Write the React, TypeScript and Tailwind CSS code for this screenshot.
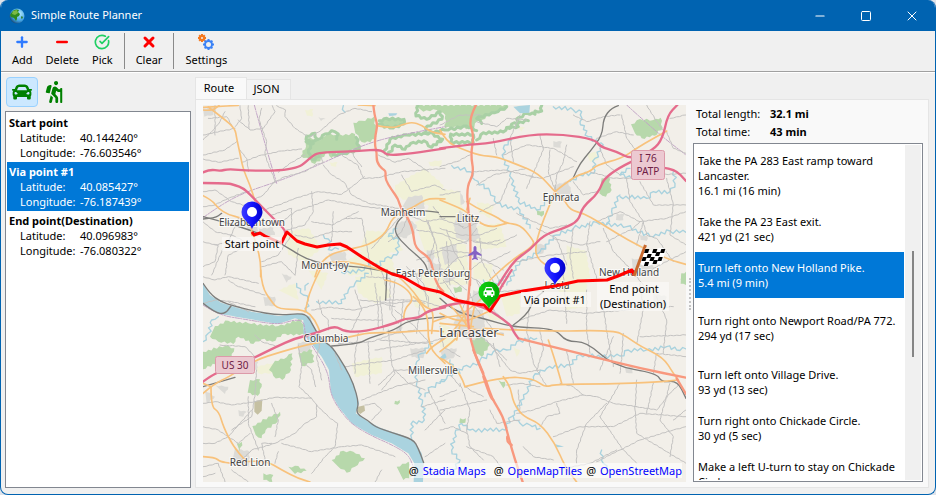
import type { ReactNode } from "react";
import { FaCar, FaHiking } from "react-icons/fa";
import { CircleCheckBig, Minus, Plus, Square, X } from "lucide-react";

/* ---------- Map data ---------- */

type Kind =
  | "farm" | "town" | "wood" | "woodEdge" | "quarry" | "river" | "stream" | "border"
  | "minor" | "rail" | "primary" | "trunk" | "motorway";

type Sheet = { x: number; y: number; shapes: Partial<Record<Kind, string[]>> };

const PAINT: Record<Kind, { fill?: string; stroke?: string; width?: number; dash?: string }> = {
  farm: { fill: "#f1f1d7" },
  town: { fill: "#dcdbd7" },
  wood: { fill: "#b7d8ab" },
  woodEdge: { stroke: "#a9d0a5", width: 9 },
  quarry: { fill: "#c5c0a2" },
  river: { fill: "#aad3df" },
  stream: { stroke: "#a9d2de", width: 4 },
  border: { stroke: "#c2a5c6", width: 3, dash: "14 4 4 4" },
  minor: { stroke: "#c3c2c1", width: 3 },
  rail: { stroke: "#7d7d7b", width: 4 },
  primary: { stroke: "#f8c27c", width: 5 },
  trunk: { stroke: "#f8987e", width: 7 },
  motorway: { stroke: "#e56b8c", width: 7 },
};

const ORDER: Kind[] = [
  "farm", "town", "wood", "woodEdge", "quarry", "river", "stream", "border",
  "minor", "rail", "primary", "trunk", "motorway",
];

/* Each sheet is surveyed at three units per map pixel, from its own origin. */
const SHEETS: Sheet[] = [
  {
    x: 290, y: 100,
    shapes: {
      wood: [
        "190 68 215 62 252 50 258 90 255 118 225 128 208 118 196 100",
        "45 112 95 120 110 100 140 105 195 102 212 146 180 152 160 165 140 160 125 175 115 158 75 192 60 178 32 168 48 140",
        "375 15 655 15 640 32 600 42 575 60 555 70 545 90 505 80 465 85 466 45 440 30 400 35",
        "270 58 340 56 345 72 300 84 272 74",
      ],
      woodEdge: [
        "50 108 75 100 82 118 62 126 48 118 50 108", "85 118 105 102 125 92 145 102 140 118", "48 125 70 130 55 150 60 172 75 180 90 160",
        "130 165 160 160 208 148 198 112", "268 62 290 55 342 58 342 72 300 84 268 72",
        "385 15 378 48 410 58 450 35 456 58 412 78 405 100 465 90 530 78 560 92",
        "283 152 300 118 350 105 420 98 458 118 425 142 402 122 362 130 345 148 315 135 292 165",
        "482 126 482 102 550 104 550 128 482 126", "560 120 580 98 640 96 665 72 715 62", "575 70 560 55 615 38 650 20",
      ],
      river: ["295 40 322 40 318 46 298 48", "670 20 720 15 718 38 690 40"],
    },
  },
  {
    x: 195, y: 75,
    shapes: {
      farm: [
        "600 330 690 280 745 330 740 400 640 380 600 360", "270 470 340 460 380 520 330 560 280 540",
        "450 560 520 520 590 540 600 600 460 600", "660 440 750 400 750 560 690 530", "330 105 355 102 352 125 336 122",
        "405 262 428 262 424 275 408 272", "700 260 740 255 735 275 705 272",
      ],
      town: [
        "640 365 680 360 690 400 640 420 622 395", "190 460 235 458 240 480 200 485", "640 430 665 450 655 480 635 470",
        "400 535 450 530 455 555 410 560", "24 100 60 95 55 120 28 125", "150 440 185 440 190 470 160 468",
        "370 125 392 132 378 138", "700 560 740 570 735 590 700 590",
      ],
      stream: [
        "385 480 400 492 400 524 430 522", "605 460 580 485 612 495 605 540 570 550 550 575 520 562 508 585 440 592",
        "445 92 450 112",
      ],
      border: ["178 90 205 190 245 325", "24 428 80 388 150 352 240 322 330 288 440 238 520 205 600 183 750 155"],
      minor: [
        "90 110 75 140 50 170 24 195", "130 135 165 165 205 160 240 110 232 92", "24 180 120 160", "40 130 95 125 110 150",
        "24 240 90 225 125 200", "140 262 200 240 260 228 320 222", "200 100 192 135 215 200 210 240 240 318",
        "245 92 272 105 270 125 300 160 335 182", "345 185 380 165 430 120 480 100 530 110", "24 252 70 262 130 250",
        "24 395 60 390 100 370 150 352", "205 405 250 390 300 370 370 350 440 358 490 320 508 305", "230 326 270 305 330 290 360 270 385 262 375 240",
        "385 270 410 300 448 322 470 360 520 385 610 400", "440 240 490 272 505 310 550 308 620 290 750 280", "275 465 330 450 355 410 350 350",
        "255 445 300 410 400 375 510 395 600 405", "415 410 410 500", "350 440 410 450 490 410", "24 440 60 470 110 480 150 500",
        "50 600 80 530 110 480", "90 600 100 540 180 500", "60 510 100 500 130 430", "450 430 500 430 515 510 530 600",
        "530 520 585 460 610 430", "620 300 650 350 720 330 750 345", "640 420 690 440 750 430", "230 420 290 400 290 480 250 540 200 560",
        "200 575 260 560 300 600", "24 500 70 512 60 560 24 575", "550 240 600 262 640 250 700 290", "500 275 480 250 470 225",
        "240 318 205 360 180 372", "160 290 155 250 135 225", "24 350 60 345 110 380 160 395", "700 440 720 500 700 560", "330 240 290 262 250 292",
        "640 420 620 470 580 500", "300 480 350 490 410 470 470 470", "135 92 140 130 120 155", "310 520 300 600", "60 92 60 180", "160 92 162 160",
      ],
      rail: ["24 425 100 445 180 470 260 505 330 552 400 570 500 575 600 595", "24 432 60 430 80 415", "730 412 680 405 640 410 605 440 598 475 640 520 690 562 700 595"],
      primary: [
        "40 96 85 130 120 160 125 190 137 245 145 285 165 330 180 378", "24 362 50 375 70 400 100 420 140 428 170 450 170 480",
        "175 480 185 510 197 560 197 605", "24 97 60 95 130 91", "545 152 590 160 620 150 650 141 680 150 708 172 750 178",
        "617 412 590 430 575 470 540 500 500 515 450 525 400 540 370 575 360 605", "617 412 650 400 680 380 705 370 750 372",
        "350 572 400 562 450 560 510 570 600 600", "490 90 540 92", "24 105 50 108 72 92",
      ],
      trunk: ["535 90 538 120 548 150 540 185 540 215 545 230 545 262 562 282 573 288 570 312 590 345 610 372 617 400 640 430 655 470 660 520 705 548 715 590"],
      motorway: [
        "24 292 45 283 75 288 100 282 160 287 255 287 305 278 325 268 355 240 375 233 440 230 490 228 560 223 575 242 650 235 750 220",
        "24 324 95 324 120 330 145 340 165 358 200 395 250 445 275 470 262 503",
      ],
    },
  },
  {
    x: 440, y: 95,
    shapes: {
      farm: [
        "0 280 60 290 70 350 40 400 0 380", "0 430 80 450 85 570 0 570", "110 320 160 330 150 370 115 350",
        "380 450 440 470 450 550 380 550", "100 500 160 510 150 560 100 550", "440 175 470 170 475 195 450 200", "230 92 255 98 245 110",
      ],
      town: [
        "60 345 105 380 120 430 90 440 50 430 40 390", "5 455 50 450 55 490 15 510", "530 355 553 358 550 376 528 375",
        "340 138 366 140 362 158 340 155", "340 270 385 260 400 305 350 315", "575 490 640 500 640 545 580 540", "60 285 75 320 62 330",
        "600 420 622 422 620 438 602 435", "285 445 320 450 310 475 288 478",
      ],
      wood: [
        "573 88 600 72 640 75 662 68 668 98 645 122 605 130 585 115",
        "485 250 505 245 515 285 498 305 478 295", "580 210 590 205 605 235 595 250", "290 345 312 348 305 365 292 360", "724 535 738 538 738 570 722 566",
      ],
      woodEdge: ["200 98 235 95 230 72 262 55 285 58 285 48 305 48 305 32"],
      stream: [
        "340 35 400 45 425 50 420 80 445 125 490 150 465 190 462 235 420 240 390 260", "215 135 190 160 190 190 215 250 235 320 290 345 345 300",
        "35 212 90 230 105 255 150 290 170 325 240 345 270 400", "738 412 690 408 640 425 560 395 470 382 400 400 350 420 300 470 240 500 200 570",
        "540 300 515 350 500 385", "540 305 620 310 640 290 690 290 705 265 700 230", "570 220 540 240 575 250",
      ],
      border: ["560 30 650 112 738 180"],
      minor: [
        "0 90 60 60 120 60", "110 80 170 95 200 70 260 75", "90 180 50 200 0 215", "100 230 190 225 280 245", "190 180 260 150 340 160 410 200",
        "240 60 210 130 220 200", "300 120 310 165 260 280", "330 165 325 230 345 285", "380 150 370 200 350 240 345 290", "270 245 310 250 360 230 400 215",
        "400 60 440 80 490 65 540 60", "470 130 530 110 580 120", "545 60 560 130 590 170", "620 30 650 80 672 110", "690 70 738 60", "680 110 700 160 738 175",
        "0 400 60 420 120 420 170 400", "0 540 50 490 90 480 150 500 210 470", "100 440 170 450 230 420", "120 350 180 320 210 250",
        "230 355 280 380 330 400 380 390", "400 260 430 300 470 290", "450 230 520 250 560 250 640 240 738 235", "560 250 570 320 610 380 590 450",
        "470 380 540 350 600 380 680 370 738 350", "450 380 440 450 470 550", "490 400 520 470 570 520 610 570", "610 380 620 420 650 430 700 500",
        "680 250 700 330 690 420 738 450", "290 400 350 430 380 510", "340 430 420 450 480 440", "400 400 390 480 400 550", "20 440 30 570",
        "120 430 125 500 160 560", "50 380 70 400 120 380", "0 460 80 440 110 400", "230 500 330 480 440 470", "110 270 160 240 260 220",
        "600 260 640 330 738 330", "480 160 500 210 540 240", "60 290 0 300", "160 130 170 180", "500 440 580 400 600 380", "640 520 738 470",
      ],
      rail: ["535 32 515 38 490 70 487 120 450 170 420 205 400 248", "0 365 45 365"],
      primary: [
        "0 105 20 140 60 160 120 182 170 185 230 208 295 235 345 290", "345 290 400 245 450 230 470 210 545 190 590 160 640 130 680 108",
        "345 290 325 340 300 400 285 460 292 490 315 508", "345 290 370 310 390 345 430 355 475 380 530 415 600 455 690 495 738 508",
        "80 320 110 340 170 365 195 385 240 388 275 430 285 450 215 495 150 555", "0 315 50 335 80 350 140 400 200 385", "80 345 90 310",
      ],
      trunk: ["108 30 85 75 102 120 92 180 102 235 80 275 85 350 92 410 90 570"],
      motorway: [
        "0 160 90 148 150 145 270 118 370 118 465 133 480 155 530 170 575 193 640 165 668 130 683 60 712 30",
        "575 200 497 238 475 295 428 335 415 378 375 398 310 420 270 465 230 490 200 530 175 570", "668 218 705 222 738 258",
      ],
    },
  },
  {
    x: 360, y: 200,
    shapes: {
      farm: ["210 10 300 20 310 130 200 130 190 60", "20 90 100 100 130 150 40 170 0 150", "340 80 420 70 440 140 350 150", "180 220 260 210 270 280 200 280"],
      town: [
        "110 70 140 60 160 90 140 115 105 110", "245 155 285 150 290 185 255 195", "200 150 225 150 220 190 200 185", "110 380 125 375 125 400 108 400",
        "290 330 370 330 375 380 340 405 290 395", "230 200 260 210 240 230", "160 215 190 220 185 240",
      ],
      wood: ["280 262 300 258 305 275 285 280"],
      minor: [
        "170 90 240 100 320 130", "200 60 230 140 240 200 230 280", "260 90 280 150 310 200 320 250", "170 180 250 150 330 160",
        "220 20 250 60 310 80", "330 120 380 130 420 120", "330 210 370 180 430 210", "20 230 90 235 90 330", "0 300 100 310 180 300 240 320",
        "60 290 70 390", "130 300 120 390 150 430", "180 310 170 400", "240 380 250 440 300 470", "370 270 320 300 300 340", "60 420 200 430 290 400",
        "330 280 345 320 400 390", "350 400 400 440 440 480", "250 240 290 300", "140 200 190 250 200 300", "300 220 350 240 370 260",
      ],
      primary: ["110 225 155 265 190 320 222 330 215 400", "310 345 260 350 220 365", "310 350 280 400 215 440 200 460", "310 340 350 310 370 290"],
    },
  },
  {
    x: 195, y: 270,
    shapes: {
      farm: ["480 20 560 10 590 80 540 100 490 70", "470 280 560 260 560 310 480 320", "250 60 300 40 310 90", "640 50 740 60 740 120 660 110", "180 290 235 280 230 310 190 310", "340 0 400 10 380 60"],
      town: [
        "205 80 240 80 240 108 210 108", "308 218 350 212 345 255 310 248", "160 275 190 275 185 300 162 298", "645 235 690 235 685 265 650 262",
        "60 345 100 350 90 372", "130 420 155 425 145 440 132 438", "120 535 165 545 160 590 110 585", "30 360 60 380 35 400", "260 10 290 20 275 38",
      ],
      wood: [
        "60 168 100 152 160 160 250 168 320 148 330 195 262 192 232 215 200 208 175 222 130 200 115 222 70 215 45 200",
        "24 245 90 228 118 235 110 262 70 278 24 298", "240 272 275 262 292 250 288 300 262 330 235 318 222 300",
        "165 330 195 328 200 350 188 378 158 368", "172 468 255 425 248 455 212 480 200 505 182 495",
        "410 570 445 542 475 545 510 565 480 590 455 608 430 590", "280 590 310 588 335 602 300 612", "600 392 614 390 608 404 598 402",
        "605 590 640 575 650 620 625 630", "205 610 235 615 232 636 205 630", "310 248 352 240 358 275 320 288", "125 520 140 515 135 545",
      ],
      quarry: ["178 394 202 388 200 422 188 434 178 425", "490 410 508 406 510 422 496 432 486 424"],
      river: [
        "24 42 45 75 78 98 108 108 170 125 250 138 320 130 345 140 360 180 385 215 410 230 450 290 475 340 492 400 482 430 520 455 560 475 620 495 655 510 680 550 686 580 684 636 656 636 658 580 640 550 590 520 530 495 470 460 430 410 408 370 402 300 380 260 345 215 325 190 325 150 300 145 250 162 150 145 95 135 70 132 24 102",
      ],
      stream: [
        "305 40 325 75 340 90 335 125", "340 40 330 60", "365 95 440 100 460 60 480 40 520 10", "24 215 40 190 50 150 70 140",
        "712 220 680 250 665 275 665 340 682 400 688 450 648 462 650 505", "750 330 710 350 690 380",
      ],
      border: ["24 105 70 135 150 148 250 165 300 148 328 155 330 195 350 225 400 305 406 370 430 415 470 463 530 498 590 524 640 553 655 590"],
      minor: [
        "24 100 60 90 110 95 180 110", "100 30 130 50 210 75", "24 20 60 30 100 20 190 40", "100 95 160 125", "180 195 200 215 250 230",
        "75 225 150 230 180 260", "24 400 60 395 110 405 180 395 240 382 350 385 365 405", "365 405 365 440 330 460 300 490 240 520 170 540 140 570",
        "365 405 400 440 428 460 420 530 390 560 350 610", "310 225 320 290 312 350 350 385", "185 300 180 370 170 440 110 480", "160 380 160 460 190 540",
        "24 470 70 480 130 520 165 490", "24 520 60 520 100 500 170 420", "24 590 70 580 90 636", "210 570 200 520 230 520", "260 520 350 545 440 530 500 525 560 545 600 560",
        "250 545 240 580", "350 120 400 112 480 120 560 100 600 110", "370 90 380 130 400 150 400 180", "480 60 500 120 470 180",
        "540 40 550 120 550 170", "600 30 590 130 610 160", "410 145 480 150 560 150", "430 220 530 215 600 190 660 180", "450 290 520 280 600 270 690 240",
        "520 215 525 340", "480 310 480 250 490 190", "580 180 590 280 600 310 560 360", "540 240 700 215", "550 345 600 300 690 300",
        "510 405 540 400 560 420 530 450", "500 390 600 350 690 330", "600 300 640 340 690 360", "690 480 750 420", "700 360 750 460", "560 600 540 636",
        "690 560 750 520", "680 410 750 390", "420 250 440 300", "24 620 60 610", "380 200 365 260 380 330", "600 120 660 170 700 215", "570 90 640 90 690 100",
        "330 280 350 300 362 350", "110 600 160 636", "240 500 250 450 230 400", "660 0 670 40 700 80 700 110", "560 0 575 60", "720 0 750 20",
      ],
      rail: [
        "24 40 45 72 78 95 108 105 170 122 250 136 320 130 340 140 362 182 385 215 410 228 450 290 475 340 492 400 482 430 520 452 540 470 590 488 655 508 670 535 686 578",
        "24 100 60 128 90 132 108 108", "410 228 490 222 520 205 600 180 640 150 750 140", "24 350 120 322", "576 0 572 90",
      ],
      primary: [
        "24 370 60 340 100 322 180 270 260 245 330 225 400 212 470 200 520 188 600 188 700 180 745 185", "48 350 48 410 72 425 85 470 115 530 150 570",
        "150 575 210 570 260 600 310 625 345 636", "24 560 60 562 75 575 110 580", "197 0 200 50 230 95 250 118 330 118 360 150 375 185",
        "375 0 345 60 333 115 330 125", "570 30 600 35 640 60 655 90 630 115 625 150", "655 80 700 115 698 230 750 280", "24 340 48 350",
      ],
      trunk: ["720 25 730 50 745 65"],
      motorway: ["24 335 60 308 100 300 180 262 240 232 300 205 370 188 420 167 450 185 510 185 600 160 630 145 670 145 700 122 750 112"],
    },
  },
  {
    x: 440, y: 270,
    shapes: {
      farm: ["180 70 240 60 240 130 200 140", "120 90 150 150 190 150", "330 0 440 20 440 110 380 120", "220 230 240 240 230 260", "0 150 60 200 20 240 0 230"],
      town: [
        "60 130 130 140 135 190 95 215 60 190 40 160", "0 240 50 235 40 265 10 270", "555 292 580 290 578 310 558 308", "100 60 130 70 120 100 95 95",
        "640 70 680 80 680 110 640 105", "0 10 50 20 20 40", "210 160 235 170 225 190",
      ],
      wood: ["725 10 738 5 738 38 722 30", "60 445 78 445 76 458 58 458", "95 210 125 200 150 225 125 260 105 250", "175 330 195 335 190 355"],
      river: ["345 522 372 530 350 532", "0 262 15 250 20 262 5 270"],
      stream: [
        "0 335 20 325 70 290 110 285 120 270 160 245 200 240 230 215 290 205", "738 237 710 240 680 230 620 240 565 240 540 258 410 258 390 285 320 295 280 320 260 370 215 440 195 480 90 480 65 460 45 490 35 540 60 570 40 600",
        "30 270 45 300 60 310", "220 440 240 460 270 465 300 475", "485 540 490 580 500 600", "130 30 160 50 200 20",
      ],
      minor: [
        "0 40 40 30 80 60", "110 30 130 80 170 130 210 165", "120 70 240 60", "240 150 330 120 440 130 560 120 700 110", "370 10 380 160", "440 60 440 180",
        "490 110 500 185 520 290", "270 100 260 180 280 280 320 350", "550 190 545 260 540 310", "600 40 610 120 590 220", "650 80 680 150 670 250",
        "140 210 210 300 240 310 300 300", "60 340 75 380 90 420 80 480 90 530 130 570", "0 420 70 405 140 390", "0 380 50 360", "230 430 280 420 350 395 430 375 470 380 520 400 590 410",
        "360 340 400 350 430 375", "590 330 585 420 590 490 680 545 738 580", "500 400 440 460 410 540 410 580", "340 500 420 470 520 470 600 430 738 440",
        "470 575 540 540 600 510 700 480 738 470", "590 410 650 420 690 370 715 345", "540 340 480 440", "480 440 550 540 590 580", "250 530 280 560 340 570",
        "150 420 170 460 240 450", "300 470 320 440 360 430 350 400", "235 360 240 430", "0 480 40 470 80 490", "80 530 160 560 190 600", "130 380 90 360 75 350",
        "440 180 450 250", "380 240 400 340", "520 200 480 300", "600 200 738 195", "640 310 650 250 738 260", "640 340 620 430", "690 340 660 450 700 500 690 560", "738 420 700 450",
        "300 180 310 240 290 300", "200 345 240 340 300 350", "160 0 190 50", "0 210 60 180", "110 210 140 190 190 190", "20 300 60 350", "350 600 450 580 530 540", "160 220 180 290",
      ],
      rail: ["0 85 40 125 130 145 220 172 345 175 378 215 440 215 520 288 650 310 665 337 712 332 738 385", "220 165 262 135 280 90 310 65"],
      primary: [
        "130 175 300 185 520 180 560 200 600 228 670 262 700 310 715 330", "325 210 345 270 365 340", "75 350 185 320 280 325 315 352 345 343 500 342 650 337 712 330",
        "190 320 210 345 220 400 250 440 300 460 345 520 375 590 410 636", "75 350 62 310 15 270 0 265", "0 130 60 165 150 122", "0 245 40 215 80 170 190 195",
        "30 105 70 150 90 180", "50 85 75 130 78 165", "0 160 100 170", "105 100 95 150 92 175", "60 165 50 210",
      ],
      trunk: ["90 30 85 80 82 140 92 215 115 280 140 335 155 385 190 440 205 500 225 570 248 636", "130 320 150 380 160 390", "100 240 130 310", "235 205 450 258 600 295 738 323", "710 325 738 372", "202 500 200 515 215 525"],
      motorway: ["150 122 210 160 220 185 235 205", "215 0 190 40 170 75 150 122", "0 112 60 95 105 103 150 122"],
    },
  },
];

/* Winds a coordinate list like a creek or a ragged field edge. */
function windingPath(n: number[], meander: number, close: boolean): string {
  let d = `M${n[0]} ${n[1]}`;
  let side = 1;
  for (let i = 2; i < n.length; i += 2) {
    const dx = n[i] - n[i - 2];
    const dy = n[i + 1] - n[i - 1];
    const length = Math.hypot(dx, dy) || 1;
    const steps = Math.max(1, Math.round(length / 9));
    for (let s = 1; s < steps; s++) {
      const swing = side * meander * (0.5 + ((s * 7 + i * 3) % 5) / 5);
      const t = s / steps;
      d += `L${(n[i - 2] + dx * t - (dy / length) * swing).toFixed(1)} ${(n[i - 1] + dy * t + (dx / length) * swing).toFixed(1)}`;
      side = -side;
    }
    d += `L${n[i]} ${n[i + 1]}`;
  }
  return close ? d + "Z" : d;
}

/* Rounds the corners of a coordinate list through the middle of each segment. */
function smoothPath(n: number[]): string {
  let d = `M${n[0]} ${n[1]}`;
  for (let i = 2; i < n.length - 2; i += 2) {
    d += `Q${n[i]} ${n[i + 1]} ${(n[i] + n[i + 2]) / 2} ${(n[i + 1] + n[i + 3]) / 2}`;
  }
  return d + `L${n[n.length - 2]} ${n[n.length - 1]}`;
}

const MEANDER: Partial<Record<Kind, number>> = { stream: 5, wood: 3, woodEdge: 3, town: 2, farm: 2, minor: 1 };

function trace(list: string, kind: Kind): string {
  const n = list.split(" ").map(Number);
  const meander = MEANDER[kind] ?? 0;
  const close = Boolean(PAINT[kind].fill);
  return meander || close ? windingPath(n, meander, close) : smoothPath(n);
}

function Terrain() {
  return (
    <>
      {ORDER.map((kind) => {
        const p = PAINT[kind];
        return SHEETS.map((sheet) => (
          <g
            key={`${kind}-${sheet.x}-${sheet.y}`}
            transform={`translate(${sheet.x} ${sheet.y}) scale(0.33333)`}
            fill={p.fill ?? "none"}
            stroke={p.stroke ?? "none"}
            strokeWidth={p.width}
            strokeDasharray={p.dash}
            strokeLinejoin="round"
            strokeLinecap="round"
          >
            {(sheet.shapes[kind] ?? []).map((list) => (
              <path key={list} d={trace(list, kind)} />
            ))}
          </g>
        ));
      })}
    </>
  );
}

const TOWNS = [
  { name: "Elizabethtown", x: 252, y: 226 },
  { name: "Mount·Joy", x: 325, y: 269 },
  { name: "Manheim", x: 403, y: 216 },
  { name: "Lititz", x: 468, y: 222 },
  { name: "Ephrata", x: 561, y: 201 },
  { name: "East Petersburg", x: 433, y: 277 },
  { name: "Columbia", x: 326, y: 342 },
  { name: "Millersville", x: 433, y: 374 },
  { name: "Red Lion", x: 250, y: 466 },
  { name: "New Holland", x: 629, y: 276 },
  { name: "Leola", x: 557, y: 289 },
];

function Pin({ x, y, color, children }: { x: number; y: number; color: string; children: ReactNode }) {
  return (
    <g transform={`translate(${x} ${y})`}>
      <path d="M0 0C-2 -6 -10.500 -9.500 -10.500 -17A10.500 10.500 0 0 1 10.500 -17C10.500 -9.500 2 -6 0 0Z" fill={color} />
      {children}
    </g>
  );
}

function RouteMap() {
  return (
    <svg
      className="block size-full font-['Noto_Sans',sans-serif]"
      viewBox="203 105 483 377"
      preserveAspectRatio="xMidYMid slice"
      role="img"
      aria-label="Route map"
    >
      <defs>
        <linearGradient id="pinBlue" x1="0" x2="1" y1="0" y2="0">
          <stop offset="0" stopColor="#3c3cff" />
          <stop offset="0.500" stopColor="#1414ff" />
          <stop offset="1" stopColor="#0000c8" />
        </linearGradient>
        <linearGradient id="pinGreen" x1="0" x2="1" y1="0" y2="0">
          <stop offset="0" stopColor="#14d214" />
          <stop offset="1" stopColor="#00a800" />
        </linearGradient>
      </defs>
      <rect x="203" y="105" width="483" height="377" fill="#f2efe9" />
      <Terrain />

      <g fontSize="10" fill="#444444" stroke="#ffffff" strokeOpacity="0.7" strokeWidth="2" paintOrder="stroke" textAnchor="middle">
        {TOWNS.map((t) => (
          <text key={t.name} x={t.x} y={t.y}>{t.name}</text>
        ))}
        <text x="469" y="337" fontSize="13">Lancaster</text>
      </g>

      <path
        d="M475 246c1 0 1.500 1 1.500 2v3l5 3.500v1.500l-5-1.500v3l1.500 1.500v1l-3-1-3 1v-1l1.500-1.500v-3l-5 1.500v-1.500l5-3.500v-3c0-1 .5-2 1.500-2z"
        fill="#8461c4"
      />

      <g fill="#ecc9d1" stroke="#dc9aa9">
        <rect x="215.500" y="356.500" width="39" height="17" rx="2" />
        <rect x="631.500" y="150.500" width="33" height="29" rx="2" />
      </g>
      <g fontSize="10" fill="#6e2046" textAnchor="middle">
        <text x="235" y="369">US 30</text>
        <text x="648" y="162">I 76</text>
        <text x="648" y="175">PATP</text>
      </g>

      <path
        d="M252 232L254 235L260 233L265 236L281 243L287 232L297 241L305 244L317 247L328 245L340 244L347 247L362 257L380 268L392 274L403 277L422 288L440 292L455 300L475 304L484 305L490 311L500 296L523 291L555 286L578 281L607 280L618 276L632 270L634 275"
        fill="none" stroke="#ff0000" strokeWidth="3" strokeLinejoin="round"
      />

      <Pin x={252} y={229} color="url(#pinBlue)"><circle cy="-17" r="5" fill="#fff" /></Pin>
      <Pin x={555} y={285} color="url(#pinBlue)"><circle cy="-17" r="5" fill="#fff" /></Pin>
      <Pin x={489} y={309} color="url(#pinGreen)">
        <path
          d="M-3 -22H3L4.500 -18.500 5.500 -17.500V-13.500H4V-12H2V-13.500H-2V-12H-4V-13.500H-5.500V-17.500L-4.500 -18.500Z"
          fill="#fff"
        />
        <path d="M-2.500 -20.800H2.500L3.200 -18.700H-3.200Z" fill="#00bc00" />
        <circle cx="-3.300" cy="-16" r="1" fill="#00bc00" />
        <circle cx="3.300" cy="-16" r="1" fill="#00bc00" />
      </Pin>

      <path d="M645.500 245L634 276" stroke="#c8692e" strokeWidth="3" />
      <g transform="translate(646 247) skewX(-18)">
        <path d="M0 1Q6 5 11 2T21 3V18Q16 15 11 18T0 17Z" fill="#fff" />
        <g fill="#000">
          {[0, 1, 2, 3].flatMap((row) =>
            [0, 1, 2, 3, 4]
              .filter((col) => (row + col) % 2 === 0)
              .map((col) => (
                <rect key={`${row}-${col}`} x={col * 4} y={row * 4 + 1 + [1, 2, 1, 0, 1][col]} width="4" height="4" />
              )),
          )}
        </g>
      </g>

      <g fill="#f9f8f6" fillOpacity="0.75">
        <rect x="222" y="237" width="60" height="14" />
        <rect x="521" y="292" width="70" height="15" />
        <rect x="597" y="282" width="72" height="29" />
      </g>
      <g fontSize="11" fill="#000" textAnchor="middle">
        <text x="252" y="248">Start point</text>
        <text x="555" y="304">Via point #1</text>
        <text x="634" y="293">End point</text>
        <text x="633" y="308">(Destination)</text>
      </g>
    </svg>
  );
}

/* ---------- Window chrome ---------- */

function Globe() {
  return (
    <svg viewBox="0 0 16 16" className="size-4">
      <defs>
        <radialGradient id="sea" cx="0.65" cy="0.35" r="0.8">
          <stop offset="0" stopColor="#b4ecff" />
          <stop offset="0.600" stopColor="#3f9fe0" />
          <stop offset="1" stopColor="#0a2a50" />
        </radialGradient>
      </defs>
      <circle cx="8" cy="8" r="7.500" fill="url(#sea)" />
      <path d="M3 4C5 1 8 1 10 2l-1 2 2 2-1 2-2 1v2l-1 2-2-3-3-1-1-2Z" fill="#2e8a1e" />
      <path d="M4 3l4-1 1 3-3 2-3-1Z" fill="#7cbb45" />
      <path d="M12.500 8l1.500 1-1 2-1-1Z" fill="#2e7d1e" />
    </svg>
  );
}

function Gear({ cx, cy, r, color }: { cx: number; cy: number; r: number; color: string }) {
  return (
    <g transform={`translate(${cx} ${cy})`} fill="none" stroke={color}>
      <circle r={r - 1} strokeWidth="2" />
      {[0, 45, 90, 135, 180, 225, 270, 315].map((a) => (
        <path key={a} d={`M0 ${-r + 1}V${-r - 1}`} strokeWidth="2" transform={`rotate(${a})`} />
      ))}
    </g>
  );
}

function Gears() {
  return (
    <svg viewBox="0 0 16 16" className="size-4">
      <Gear cx={4} cy={4} r={3} color="#f5781e" />
      <Gear cx={10.5} cy={10.5} r={4.5} color="#3b82f6" />
    </svg>
  );
}

function ToolButton({ label, icon }: { label: string; icon: ReactNode }) {
  return (
    <button type="button" className="flex flex-col items-center gap-0.5 leading-4">
      <span className="flex h-4 items-center">{icon}</span>
      {label}
    </button>
  );
}

const POINTS = [
  { name: "Start point", lat: "40.144240°", lon: "-76.603546°" },
  { name: "Via point #1", lat: "40.085427°", lon: "-76.187439°", selected: true },
  { name: "End point(Destination)", lat: "40.096983°", lon: "-76.080322°" },
];

const STEPS = [
  { lines: ["Take the PA 283 East ramp toward", "Lancaster.", "16.1 mi (16 min)"] },
  { lines: ["Take the PA 23 East exit.", "421 yd (21 sec)"] },
  { lines: ["Turn left onto New Holland Pike.", "5.4 mi (9 min)"], selected: true },
  { lines: ["Turn right onto Newport Road/PA 772.", "294 yd (17 sec)"], tall: true },
  { lines: ["Turn left onto Village Drive.", "93 yd (13 sec)"] },
  { lines: ["Turn right onto Chickade Circle.", "30 yd (5 sec)"] },
  { lines: ["Make a left U-turn to stay on Chickade", "Circle."] },
];

export default function App() {
  return (
    <div className="h-screen bg-[#dfe3ea]">
      <div className="flex h-full flex-col overflow-hidden rounded-lg border border-t-0 border-[#0063b1] bg-[#f0f0f0] font-['Noto_Sans',sans-serif] text-[11px] text-black">
        <header className="flex h-[31px] shrink-0 items-center bg-[#0063b1] pl-2 text-white">
          <Globe />
          <h1 className="ml-1.5 flex-1">Simple Route Planner</h1>
          <button type="button" aria-label="Minimize" className="flex h-full w-[46px] items-center justify-center"><Minus className="size-3.5" strokeWidth={2} /></button>
          <button type="button" aria-label="Maximize" className="flex h-full w-[46px] items-center justify-center"><Square className="size-3" strokeWidth={2} /></button>
          <button type="button" aria-label="Close" className="flex h-full w-[46px] items-center justify-center"><X className="size-4" strokeWidth={1.5} /></button>
        </header>

        <div className="flex h-[41px] shrink-0 items-center gap-[13px] border-b border-[#a0a0a0] px-[11px]">
          <ToolButton label="Add" icon={<Plus className="size-4 text-[#2f7bff]" strokeWidth={3.5} />} />
          <ToolButton label="Delete" icon={<Minus className="size-4 text-[#ff0000]" strokeWidth={4} />} />
          <ToolButton label="Pick" icon={<CircleCheckBig className="size-4 text-[#1fcf63]" strokeWidth={2.5} />} />
          <div className="-mx-0.5 h-9 w-px bg-[#8a8a8a]" />
          <ToolButton label="Clear" icon={<X className="size-4 text-[#ff0000]" strokeWidth={4.5} />} />
          <div className="-mx-0.5 h-9 w-px bg-[#8a8a8a]" />
          <ToolButton label="Settings" icon={<Gears />} />
        </div>

        <main className="flex min-h-0 flex-1 gap-1 border-t border-white px-1 pb-1.5 pt-1">
          <section className="flex w-[186px] shrink-0 flex-col">
            <div className="flex px-px">
              <button type="button" aria-label="Drive" className="flex h-[30px] w-8 items-center justify-center rounded-sm border border-[#99d1ff] bg-[#cce8ff] text-[#008000]">
                <FaCar className="size-5" />
              </button>
              <button type="button" aria-label="Walk" className="flex h-[30px] w-8 items-center justify-center text-[#008000]">
                <FaHiking className="size-[22px]" />
              </button>
            </div>
            <ul className="mt-1 flex-1 border border-[#828790] bg-white p-px leading-[15px]">
              {POINTS.map((p) => (
                <li key={p.name} className={p.selected ? "bg-[#0078d7] px-0.5 py-0.5 text-white" : "px-0.5 py-0.5"}>
                  <div className="font-bold">{p.name}</div>
                  <dl className="grid grid-cols-[60px_auto] pl-[11px]">
                    <dt>Latitude:</dt>
                    <dd>{p.lat}</dd>
                    <dt>Longitude:</dt>
                    <dd>{p.lon}</dd>
                  </dl>
                </li>
              ))}
            </ul>
          </section>

          <section className="flex min-w-0 flex-1 flex-col pr-0.5">
            <div role="tablist" className="flex items-end">
              <button type="button" role="tab" aria-selected="true" className="-mb-px h-[23px] w-[52px] border border-b-0 border-[#e5e5e5] bg-[#f9f9f9] pb-0.5 pr-1">Route</button>
              <button type="button" role="tab" aria-selected="false" className="h-5 w-11 border border-b-0 border-l-0 border-[#e5e5e5] bg-[#f3f3f3] pr-1">JSON</button>
            </div>
            <div className="flex min-h-0 flex-1 border border-[#e5e5e5] bg-[#f9f9f9] py-[5px] pl-[7px] pr-[5px]">
              <div className="relative min-w-0 flex-1 overflow-hidden">
                <RouteMap />
                <p className="absolute bottom-1 right-1 flex h-[15px] items-center gap-1 whitespace-nowrap bg-white/60 leading-[15px]">
                  <span>@</span> <a href="#stadia" className="text-[#0000ff]">Stadia Maps</a>
                  <span className="pl-1">@</span> <a href="#openmaptiles" className="text-[#0000ff]">OpenMapTiles</a>
                  <span>@</span> <a href="#openstreetmap" className="text-[#0000ff]">OpenStreetMap</a>
                </p>
              </div>
              <div className="flex w-[7px] shrink-0 items-center justify-center">
                <div className="h-8 border-l-2 border-dotted border-[#c4c4c4]" />
              </div>
              <div className="flex w-[230px] shrink-0 flex-col">
                <dl className="grid grid-cols-[74px_auto] pb-0.5 pl-[3px] leading-[18px]">
                  <dt>Total length:</dt>
                  <dd className="font-bold">32.1 mi</dd>
                  <dt>Total time:</dt>
                  <dd className="font-bold">43 min</dd>
                </dl>
                <div className="flex min-h-0 flex-1 border border-[#828790] bg-white p-px">
                  <ol className="h-full min-w-0 flex-1 overflow-hidden whitespace-nowrap leading-[15px]">
                    {STEPS.map((s) => (
                      <li
                        key={s.lines[0]}
                        className={
                          s.selected ? "bg-[#0078d7] px-[3px] py-2 text-white" : s.tall ? "px-[3px] pb-4 pt-[15px]" : "px-[3px] py-2"
                        }
                      >
                        {s.lines.map((line) => (
                          <div key={line}>{line}</div>
                        ))}
                      </li>
                    ))}
                  </ol>
                  <div className="ml-px w-4 shrink-0 bg-[#f0f0f0] pt-[106px]">
                    <div className="mx-auto h-[106px] w-0.5 bg-[#858585]" />
                  </div>
                </div>
              </div>
            </div>
          </section>
        </main>
      </div>
    </div>
  );
}
